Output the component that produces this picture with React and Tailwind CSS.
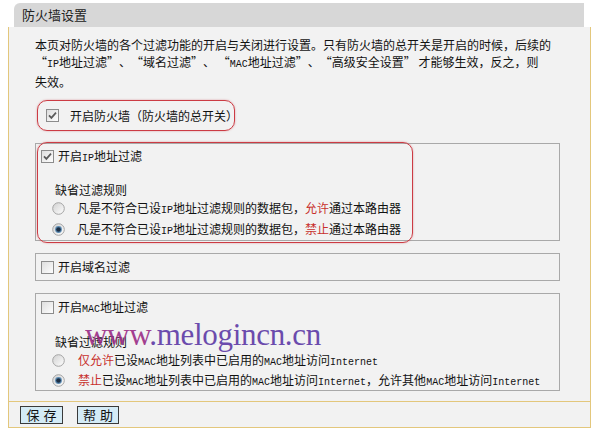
import React from 'react';

// Latin runs inside the CJK text are half-width monospace in the original
const L = ({ children }) => (
    <span className="font-['Liberation_Mono',monospace] text-[10px]">{children}</span>
);

// full-width curly quotes (SimSun draws them in a 12px cell)
const Ql = () => <span className="inline-block w-[12px] text-right">“</span>;
const Qr = () => <span className="inline-block w-[12px] text-left">”</span>;

const CheckBox = ({ checked }) => (
    <svg width="13" height="13" viewBox="0 0 13 13" className="shrink-0">
        <defs>
            <linearGradient id="cbg" x1="0" y1="0" x2="1" y2="1">
                <stop offset="0" stopColor="#dcdcdc" />
                <stop offset="1" stopColor="#ffffff" />
            </linearGradient>
        </defs>
        <rect x="0.5" y="0.5" width="12" height="12" fill="url(#cbg)" stroke="#8c8c8c" />
        {checked && (
            <path d="M3 6.3 L5.4 8.9 L10 3.6" stroke="#5a5a5a" strokeWidth="1.7" fill="none" />
        )}
    </svg>
);

const Radio = ({ checked }) => (
    <svg width="13" height="13" viewBox="0 0 13 13" className="shrink-0">
        <defs>
            <linearGradient id="rbg" x1="0" y1="0" x2="1" y2="1">
                <stop offset="0" stopColor="#d0d0d0" />
                <stop offset="1" stopColor="#ffffff" />
            </linearGradient>
        </defs>
        <circle cx="6.5" cy="6.5" r="5.8" fill="url(#rbg)" stroke="#a4a4a4" />
        {checked && (
            <>
                <circle cx="6.5" cy="6.5" r="3.4" fill="#5b8bb3" />
                <circle cx="6.5" cy="6.5" r="2.3" fill="#1c2f45" />
            </>
        )}
    </svg>
);

const Red = ({ children }) => <span className="text-[#c8302c]">{children}</span>;

const App = () => {
    return (
        <div className="relative w-[594px] h-[430px] bg-white overflow-hidden font-['Noto_Sans_CJK_SC',sans-serif] text-[12px] text-[#111]">
            {/* Title bar */}
            <div className="ml-[14px] mt-[3px] w-[570px] h-[24px] bg-[#d7d7d7] rounded-tl-[6px] flex items-center pl-[8px] text-[13px] text-[#222]">
                防火墙设置
            </div>

            {/* Body */}
            <div className="ml-[8px] w-[583px] border-x border-b border-[#e3c77c] bg-[#f2f2f2]">
                <div className="pl-[26px] pt-[9px] pb-[10px]">
                    <p className="leading-[17px]">
                        本页对防火墙的各个过滤功能的开启与关闭进行设置。只有防火墙的总开关是开启的时候，后续的<br />
                        <Ql /><L>IP</L>地址过滤<Qr />、<Ql />域名过滤<Qr />、 <Ql /><L>MAC</L>地址过滤<Qr />、<Ql />高级安全设置<Qr /> 才能够生效，反之，则<br />
                        失效。
                    </p>

                    {/* Master switch */}
                    <div className="ml-[2px] mt-[10px] w-[198px] h-[31px] rounded-[10px] border border-[#cc3c44] shadow-[0_0_2px_rgba(200,60,70,0.5)] flex items-center pl-[8px] gap-[11px]">
                        <CheckBox checked />
                        <span>开启防火墙（防火墙的总开关）</span>
                    </div>

                    {/* IP filter */}
                    <div className="relative mt-[12px] w-[525px] h-[98px] border border-[#a9a9a9] pt-[5px]">
                        <div className="flex items-center gap-[4px] pl-[5px] h-[14px]">
                            <CheckBox checked />
                            <span>开启<L>IP</L>地址过滤</span>
                        </div>
                        <div className="mt-[18px] pl-[19px] h-[17px] leading-[17px]">缺省过滤规则</div>
                        <div className="flex items-center gap-[12px] pl-[16px] h-[21px]">
                            <Radio />
                            <span>凡是不符合已设<L>IP</L>地址过滤规则的数据包，<Red>允许</Red>通过本路由器</span>
                        </div>
                        <div className="flex items-center gap-[12px] pl-[16px] h-[21px]">
                            <Radio checked />
                            <span>凡是不符合已设<L>IP</L>地址过滤规则的数据包，<Red>禁止</Red>通过本路由器</span>
                        </div>
                        {/* annotation box */}
                        <div className="absolute left-[1px] top-[-2px] w-[376px] h-[101px] rounded-[10px] border border-[#cc3c44] shadow-[0_0_2px_rgba(200,60,70,0.5)] pointer-events-none" />
                    </div>

                    {/* Domain filter */}
                    <div className="mt-[12px] w-[525px] h-[28px] border border-[#a9a9a9] pt-[6px]">
                        <div className="flex items-center gap-[4px] pl-[5px] h-[14px]">
                            <CheckBox />
                            <span>开启域名过滤</span>
                        </div>
                    </div>

                    {/* MAC filter */}
                    <div className="mt-[12px] w-[525px] h-[98px] border border-[#a9a9a9] pt-[6px]">
                        <div className="flex items-center gap-[4px] pl-[5px] h-[14px]">
                            <CheckBox />
                            <span>开启<L>MAC</L>地址过滤</span>
                        </div>
                        <div className="mt-[19px] pl-[19px] h-[17px] leading-[17px]">缺省过滤规则</div>
                        <div className="flex items-center gap-[13px] pl-[16px] h-[20px]">
                            <Radio />
                            <span><Red>仅允许</Red>已设<L>MAC</L>地址列表中已启用的<L>MAC</L>地址访问<L>Internet</L></span>
                        </div>
                        <div className="flex items-center gap-[13px] pl-[16px] h-[20px]">
                            <Radio checked />
                            <span><Red>禁止</Red>已设<L>MAC</L>地址列表中已启用的<L>MAC</L>地址访问<L>Internet</L>，允许其他<L>MAC</L>地址访问<L>Internet</L></span>
                        </div>
                    </div>
                </div>

                {/* Buttons */}
                <div className="border-t border-[#e3c77c] h-[26px] flex items-center gap-[14px] pl-[11px]">
                    <button className="w-[43px] h-[18px] bg-[#d4ebf6] border border-[#3a3a3a] text-[13px] leading-[16px] tracking-[4px] pl-[4px] text-[#111]">
                        保存
                    </button>
                    <button className="w-[42px] h-[18px] bg-[#d4ebf6] border border-[#3a3a3a] text-[13px] leading-[16px] tracking-[4px] pl-[4px] text-[#111]">
                        帮助
                    </button>
                </div>
            </div>

            {/* Watermark */}
            <div className="absolute left-[85px] top-[319px] text-[31px] leading-[31px] tracking-[-0.3px] font-['Liberation_Serif',serif] text-[#5d3aa6] opacity-90 pointer-events-none">
                <span className="text-[#9a2c86]">www</span>.melogincn.cn
            </div>
        </div>
    );
};

export default App;
